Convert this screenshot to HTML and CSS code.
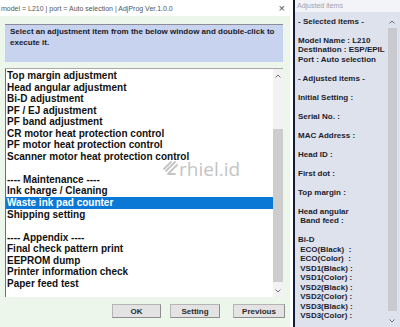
FILE: index.html
```html
<!DOCTYPE html>
<html>
<head>
<meta charset="utf-8">
<link rel="stylesheet" href="styles.css">
</head>
<body>
<div class="app">
  <div class="main">
    <div class="titlebar">
      <span class="title">model = L210 | port = Auto selection | AdjProg Ver.1.0.0</span>
      <span class="close">×</span>
    </div>
    <div class="body">
      <div class="instr">Select an adjustment item from the below window and double-click to<br>execute it.</div>
      <div class="listbox">
        <div class="items">
          <div class="row">Top margin adjustment</div>
          <div class="row">Head angular adjustment</div>
          <div class="row">Bi-D adjustment</div>
          <div class="row">PF / EJ adjustment</div>
          <div class="row">PF band adjustment</div>
          <div class="row">CR motor heat protection control</div>
          <div class="row">PF motor heat protection control</div>
          <div class="row">Scanner motor heat protection control</div>
          <div class="row"></div>
          <div class="row">---- Maintenance ----</div>
          <div class="row">Ink charge / Cleaning</div>
          <div class="row sel">Waste ink pad counter</div>
          <div class="row">Shipping setting</div>
          <div class="row"></div>
          <div class="row">---- Appendix ----</div>
          <div class="row">Final check pattern print</div>
          <div class="row">EEPROM dump</div>
          <div class="row">Printer information check</div>
          <div class="row">Paper feed test</div>
        </div>
        <div class="vscroll">
          <svg class="arrow up" width="6" height="4" viewBox="0 0 6 4"><path d="M0.5 3.5 L3 1 L5.5 3.5" fill="none" stroke="#707070" stroke-width="1"/></svg>
          <div class="track"><div class="thumb"></div></div>
          <svg class="arrow down" width="6" height="4" viewBox="0 0 6 4"><path d="M0.5 0.5 L3 3 L5.5 0.5" fill="none" stroke="#707070" stroke-width="1"/></svg>
        </div>
        <div class="watermark">
          <svg width="16" height="16" viewBox="0 0 16 16"><path d="M9 1 L2 8 M13 1 L4 10 M15 4 L6 13 M6 13 L13 13" fill="none" stroke="#c4c4c4" stroke-width="1.8" stroke-linecap="round"/></svg>
          <span>rhiel.id</span>
        </div>
      </div>
      <div class="buttons">
        <div class="btn ok">OK</div>
        <div class="btn setting">Setting</div>
        <div class="btn prev">Previous</div>
      </div>
    </div>
  </div>
  <div class="side">
    <div class="side-title">Adjusted items</div>
    <div class="side-body">
      <div class="side-text">- Selected items -

Model Name : L210
Destination : ESP/EPIL
Port : Auto selection

- Adjusted items -

Initial Setting :

Serial No. :

MAC Address :

Head ID :

First dot :

Top margin :

Head angular
 Band feed :

Bi-D
 ECO(Black)  :
 ECO(Color)  :
 VSD1(Black) :
 VSD1(Color) :
 VSD2(Black) :
 VSD2(Color) :
 VSD3(Black) :
 VSD3(Color) :</div>
      <div class="vscroll2">
        <svg class="arrow2" width="6" height="4" viewBox="0 0 6 4"><path d="M0.5 3.5 L3 1 L5.5 3.5" fill="none" stroke="#707070" stroke-width="1"/></svg>
        <div class="track2"></div>
        <svg class="arrow2" width="6" height="4" viewBox="0 0 6 4"><path d="M0.5 0.5 L3 3 L5.5 0.5" fill="none" stroke="#707070" stroke-width="1"/></svg>
      </div>
    </div>
  </div>
</div>
</body>
</html>
```

FILE: styles.css
```css
* { box-sizing: border-box; }
html, body { margin: 0; padding: 0; }
body {
  width: 400px;
  height: 327px;
  overflow: hidden;
  background: #ffffff;
  font-family: "Liberation Sans", Arial, sans-serif;
}
.app {
  display: flex;
  width: 400px;
  height: 327px;
}
.main {
  width: 293px;
  border-right: 3px solid #ffffff;
  display: flex;
  flex-direction: column;
}
.titlebar {
  height: 16px;
  background: #ffffff;
  display: flex;
  align-items: center;
  justify-content: space-between;
  padding: 0 5px 0 1px;
  color: #555555;
  font-size: 7px;
}
.close {
  font-size: 11px;
  color: #505050;
  line-height: 1;
}
.body {
  flex: 1;
  background: #edf6ea;
  padding: 8px 7px 0 5px;
  display: flex;
  flex-direction: column;
}
.instr {
  height: 38px;
  background: #c8d3f0;
  border-top: 1px solid #8c8c96;
  padding: 1px 0 0 5px;
  font-size: 8px;
  font-weight: bold;
  line-height: 11px;
  color: #1a1a28;
}
.listbox {
  position: relative;
  margin-top: 6px;
  height: 229px;
  background: #ffffff;
  border-top: 1px solid #a8a8a8;
  border-left: 1px solid #707070;
  display: flex;
}
.items {
  flex: 1;
  padding-top: 1px;
}
.row {
  height: 11.56px;
  line-height: 11.56px;
  font-size: 10px;
  font-weight: bold;
  color: #111111;
  padding-left: 1px;
  white-space: nowrap;
}
.row.sel {
  background: #0a78d4;
  color: #ffffff;
}
.vscroll {
  width: 10px;
  background: #f2f2f2;
  display: flex;
  flex-direction: column;
  align-items: center;
  padding: 5px 0 4px;
}
.arrow { display: block; flex: none; }
.track {
  flex: 1;
  width: 100%;
  padding: 51px 0 7px;
  display: flex;
}
.thumb {
  flex: 1;
  background: #cdcdcd;
}
.watermark {
  position: absolute;
  left: 156px;
  top: 91px;
  display: flex;
  align-items: center;
  gap: 1px;
  color: #c4c4c4;
  font-family: "Open Sans", "Liberation Sans", sans-serif;
  font-size: 19px;
  line-height: 18px;
}
.buttons {
  display: flex;
  justify-content: flex-end;
  margin-top: 7px;
  margin-right: -2px;
}
.btn {
  height: 14px;
  background: #e3e3e3;
  border: 1px solid #b4b4b4;
  border-right-color: #8e8e8e;
  border-bottom-color: #8e8e8e;
  font-size: 8px;
  font-weight: bold;
  color: #2a2a2a;
  display: flex;
  align-items: center;
  justify-content: center;
}
.ok { width: 49px; }
.setting { width: 50px; margin-left: 9px; }
.prev { width: 52px; margin-left: 13px; }
.side {
  flex: 1;
  border-left: 2px solid #101a36;
  display: flex;
  flex-direction: column;
}
.side-title {
  height: 12px;
  background: #f3f4f8;
  color: #a0a2b0;
  font-size: 7px;
  line-height: 12px;
  padding-left: 2px;
}
.side-body {
  flex: 1;
  background: #dde2ec;
  display: flex;
}
.side-text {
  flex: 1;
  padding: 4.5px 0 0 3px;
  font-size: 8px;
  font-weight: bold;
  line-height: 9.5px;
  color: #1c1c2c;
  white-space: pre;
  overflow: hidden;
}
.vscroll2 {
  width: 13px;
  padding: 8px 3px 4px 0;
  display: flex;
  flex-direction: column;
  align-items: center;
}
.arrow2 { display: block; flex: none; }
.track2 {
  flex: 1;
  width: 9px;
  margin: 4px 0 8px;
  background: #c9cacf;
}
```
